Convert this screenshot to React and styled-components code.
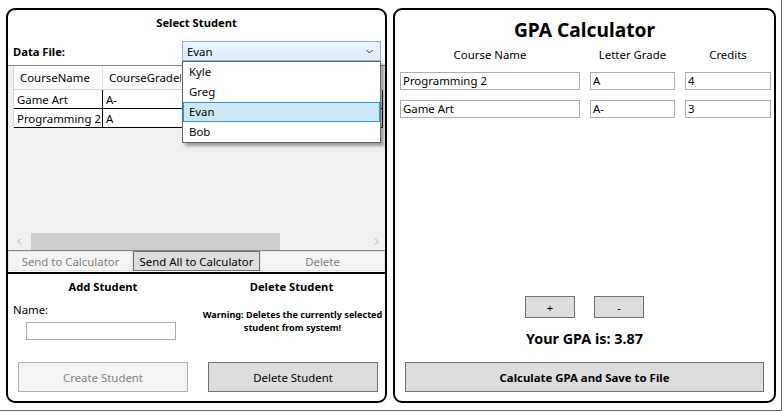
import React from 'react';
import styled, { createGlobalStyle, css } from 'styled-components';

const FONT = `"Noto Sans", "Open Sans", sans-serif`;
const BTN_BG = '#dddddd';
const BTN_BORDER = '#707070';
const DISABLED_BG = '#f4f4f4';
const DISABLED_BORDER = '#adb2b5';
const DISABLED_TEXT = '#838383';
const INPUT_BORDER = '#abadb3';

const GlobalStyle = createGlobalStyle`
  html, body {
    margin: 0;
    padding: 0;
    background: #fff;
  }
  body {
    font-family: ${FONT};
    font-size: 11.4px;
    color: #000;
  }
  * { box-sizing: border-box; }
`;

const Window = styled.div`
  width: 782px;
  height: 411px;
  border-right: 1px solid #6b6b6b;
  border-bottom: 1px solid #6b6b6b;
  padding: 8px 0 0 6px;
  display: flex;
  gap: 6px;
  align-items: flex-start;
`;

const Panel = styled.div`
  width: ${p => p.$width}px;
  height: 395px;
  border: 2px solid #000;
  border-radius: 9px;
  display: flex;
  flex-direction: column;
`;

/* ---------- left: select student ---------- */

const SelectSection = styled.section`
  display: flex;
  flex-direction: column;
`;

const SectionTitle = styled.div`
  height: ${p => p.$h || 24}px;
  line-height: ${p => p.$lh || p.$h || 24}px;
  text-align: center;
  font-weight: 700;
  font-size: 11.2px;
`;

const FileRow = styled.div`
  margin-top: 7px;
  height: 20px;
  display: flex;
  align-items: center;
  padding-left: 5px;
`;

const FieldLabel = styled.span`
  width: 169px;
  font-weight: 700;
  font-size: 11.2px;
`;

const ComboWrap = styled.div`
  position: relative;
  width: 199px;
`;

const Combo = styled.div`
  height: 20px;
  border: 1px solid #7eb4ea;
  background: linear-gradient(#ecf4fc, #dcecfc);
  display: flex;
  align-items: center;
  justify-content: space-between;
  padding: 0 7px 0 4px;
`;

const DropList = styled.ul`
  position: absolute;
  top: 20px;
  left: 0;
  width: 199px;
  margin: 0;
  padding: 0;
  list-style: none;
  background: #fff;
  border: 1px solid #646464;
  box-shadow: 3px 3px 3px rgba(0, 0, 0, 0.35);
  z-index: 10;
`;

const DropItem = styled.li`
  height: 20px;
  line-height: 18px;
  padding-left: 5px;
  border: 1px solid transparent;
  ${p => p.$selected && css`
    background: #cce8f6;
    border-color: #26a0da;
  `}
`;

const Chevron = ({ dir = 'down', color = '#333' }) => {
  const points = {
    down: '0.5 1 3.5 4 6.5 1',
    left: '4 0.5 1 3.5 4 6.5',
    right: '1 0.5 4 3.5 1 6.5',
  }[dir];
  const size = dir === 'down' ? [7, 5] : [5, 7];
  return (
    <svg width={size[0]} height={size[1]} viewBox={`0 0 ${size[0]} ${size[1]}`} fill="none">
      <polyline points={points} stroke={color} strokeWidth="1" />
    </svg>
  );
};

const Grid = styled.div`
  margin-top: 4px;
  height: 186px;
  border-top: 1px solid #828790;
  border-bottom: 1px solid #828790;
  background: #f0f0f0;
  display: flex;
  flex-direction: column;
`;

const GridRow = styled.div`
  display: grid;
  grid-template-columns: 6px 89px 280px;
  height: ${p => p.$h}px;
`;

const RowHeader = styled.div`
  background: #f0f0f0;
  border-right: 1px solid #d5d5d5;
`;

const HeadCell = styled.div`
  background: #fbfbfb;
  border-right: 1px solid #e2e2e2;
  border-bottom: 1px solid #d5d5d5;
  padding-left: 6px;
  display: flex;
  align-items: center;
  white-space: nowrap;
  overflow: hidden;
`;

const HeadText = styled.span`
  display: block;
  max-width: ${p => (p.$clip ? `${p.$clip}px` : 'none')};
  overflow: hidden;
  white-space: nowrap;
`;

const Cell = styled.div`
  background: #fff;
  border-right: 1px solid #000;
  border-bottom: 1px solid #000;
  padding-left: 3px;
  display: flex;
  align-items: center;
  white-space: nowrap;
`;

const GridFill = styled.div`
  flex: 1;
`;

const HScroll = styled.div`
  height: 17px;
  display: flex;
  align-items: stretch;
`;

const ScrollArrow = styled.div`
  width: ${p => p.$w}px;
  display: flex;
  align-items: center;
  justify-content: center;
`;

const ScrollThumb = styled.div`
  width: 249px;
  background: #cdcdcd;
`;

const ScrollTrack = styled.div`
  flex: 1;
`;

const ActionRow = styled.div`
  height: 21px;
  display: grid;
  grid-template-columns: 125px 127px 125px;
  padding-bottom: 1px;
`;

const Button = styled.button`
  font-family: ${FONT};
  font-size: ${p => p.$size || 11.4}px;
  font-weight: ${p => (p.$bold ? 700 : 400)};
  color: #000;
  background: ${BTN_BG};
  border: 1px solid ${BTN_BORDER};
  padding: 0;
  margin: 0;
  &:disabled {
    color: ${DISABLED_TEXT};
    background: ${DISABLED_BG};
    border-color: ${DISABLED_BORDER};
  }
`;

const FlatButton = styled(Button)`
  height: 20px;
  &:disabled {
    border-color: #e3e3e3;
  }
`;

/* ---------- left: add / delete ---------- */

const ManageSection = styled.section`
  flex: 1;
  border-top: 2px solid #000;
  display: grid;
  grid-template-columns: 190px 187px;
`;

const ManageColumn = styled.div`
  display: flex;
  flex-direction: column;
  padding: 3px 0 9px;
`;

const NameLabel = styled.div`
  margin-top: 5px;
  padding-left: 5px;
  height: 16px;
  line-height: 16px;
`;

const TextBox = styled.div`
  width: ${p => p.$w}px;
  height: 18px;
  border: 1px solid ${INPUT_BORDER};
  background: #fff;
  padding-left: 2px;
  line-height: 16px;
  white-space: nowrap;
`;

const NameBox = styled(TextBox)`
  margin: 4px 0 0 18px;
`;

const Warning = styled.div`
  margin-top: 11px;
  text-align: center;
  font-size: 9.1px;
  font-weight: 700;
  line-height: 13px;
  padding-left: 2px;
  white-space: nowrap;
`;

const BigButton = styled(Button)`
  margin: auto 0 0 10px;
  width: 170px;
  height: 30px;
`;

/* ---------- right: calculator ---------- */

const CalcTitle = styled.h1`
  margin: 4px 0 0;
  height: 32px;
  line-height: 32px;
  text-align: center;
  font-size: 19.2px;
  font-weight: 700;
`;

const CourseRow = styled.div`
  display: grid;
  grid-template-columns: 180px 85px 86px;
  column-gap: 10px;
  padding-left: 5px;
  margin-top: ${p => p.$mt}px;
`;

const ColHead = styled.div`
  height: 16px;
  line-height: 16px;
  text-align: center;
`;

const Spacer = styled.div`
  flex: 1;
`;

const StepRow = styled.div`
  display: flex;
  justify-content: center;
  gap: 19px;
`;

const StepButton = styled(Button)`
  width: 50px;
  height: 22px;
`;

const GpaText = styled.div`
  margin-top: 10px;
  height: 22px;
  line-height: 22px;
  text-align: center;
  font-size: 14.4px;
  font-weight: 700;
`;

const CalcButton = styled(Button)`
  margin: 12px 10px 9px;
  height: 30px;
`;

const students = ['Kyle', 'Greg', 'Evan', 'Bob'];
const grades = [
  { name: 'Game Art', grade: 'A-' },
  { name: 'Programming 2', grade: 'A' },
];
const courses = [
  { name: 'Programming 2', grade: 'A', credits: '4' },
  { name: 'Game Art', grade: 'A-', credits: '3' },
];

const App = () => {
  return (
    <>
      <GlobalStyle />
      <Window>
        <Panel $width={381}>
          <SelectSection>
            <SectionTitle $h={24} $lh={25}>Select Student</SectionTitle>
            <FileRow>
              <FieldLabel>Data File:</FieldLabel>
              <ComboWrap>
                <Combo>Evan <Chevron /></Combo>
                <DropList>
                  {students.map(s => (
                    <DropItem key={s} $selected={s === 'Evan'}>{s}</DropItem>
                  ))}
                </DropList>
              </ComboWrap>
            </FileRow>
            <Grid>
              <GridRow $h={24}>
                <RowHeader />
                <HeadCell>CourseName</HeadCell>
                <HeadCell><HeadText $clip={72}>CourseGradeLetter</HeadText></HeadCell>
              </GridRow>
              {grades.map(g => (
                <GridRow key={g.name} $h={19}>
                  <RowHeader />
                  <Cell>{g.name}</Cell>
                  <Cell>{g.grade}</Cell>
                </GridRow>
              ))}
              <GridFill />
              <HScroll>
                <ScrollArrow $w={23}><Chevron dir="left" color="#a6a6a6" /></ScrollArrow>
                <ScrollThumb />
                <ScrollTrack />
                <ScrollArrow $w={17}><Chevron dir="right" color="#a6a6a6" /></ScrollArrow>
              </HScroll>
            </Grid>
            <ActionRow>
              <FlatButton disabled>Send to Calculator</FlatButton>
              <FlatButton>Send All to Calculator</FlatButton>
              <FlatButton disabled>Delete</FlatButton>
            </ActionRow>
          </SelectSection>
          <ManageSection>
            <ManageColumn>
              <SectionTitle $h={20}>Add Student</SectionTitle>
              <NameLabel>Name:</NameLabel>
              <NameBox $w={150} />
              <BigButton disabled>Create Student</BigButton>
            </ManageColumn>
            <ManageColumn>
              <SectionTitle $h={20}>Delete Student</SectionTitle>
              <Warning>
                Warning: Deletes the currently selected
                <br />
                student from system!
              </Warning>
              <BigButton>Delete Student</BigButton>
            </ManageColumn>
          </ManageSection>
        </Panel>

        <Panel $width={383}>
          <CalcTitle>GPA Calculator</CalcTitle>
          <CourseRow $mt={1}>
            <ColHead>Course Name</ColHead>
            <ColHead>Letter Grade</ColHead>
            <ColHead>Credits</ColHead>
          </CourseRow>
          {courses.map((c, i) => (
            <CourseRow key={c.name} $mt={i === 0 ? 9 : 10}>
              <TextBox $w={180}>{c.name}</TextBox>
              <TextBox $w={85}>{c.grade}</TextBox>
              <TextBox $w={86}>{c.credits}</TextBox>
            </CourseRow>
          ))}
          <Spacer />
          <StepRow>
            <StepButton>+</StepButton>
            <StepButton>-</StepButton>
          </StepRow>
          <GpaText>Your GPA is: 3.87</GpaText>
          <CalcButton $bold>Calculate GPA and Save to File</CalcButton>
        </Panel>
      </Window>
    </>
  );
};

export default App;
